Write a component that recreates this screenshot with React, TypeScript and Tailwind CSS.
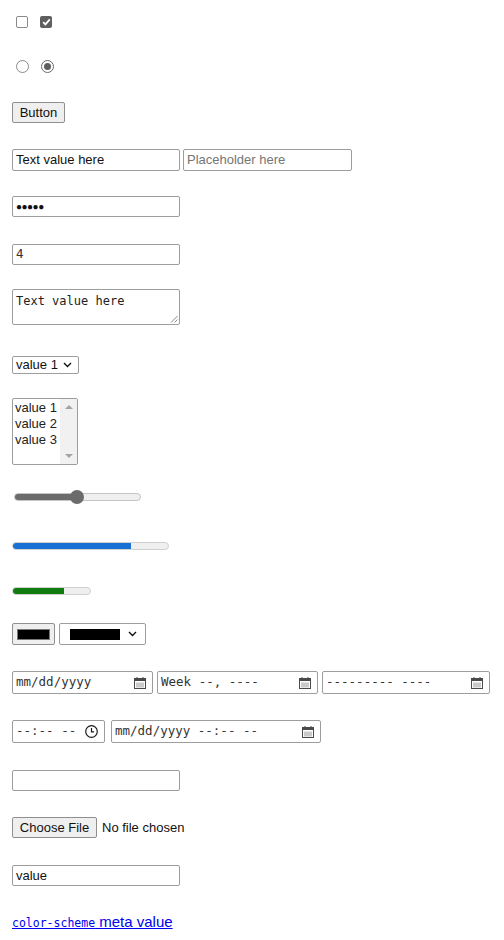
import React from "react"

// ── Small drawn glyphs ─────────────────────────────────────────────────────
function CalendarIcon() {
  return (
    <svg width="12" height="12" viewBox="0 0 12 12" className="shrink-0">
      <rect x="0.5" y="1.5" width="11" height="10" fill="none" stroke="#4a4a4a" />
      <rect x="0.5" y="1.5" width="11" height="2.5" fill="#4a4a4a" />
      <rect x="2.5" y="0" width="1" height="2" fill="#4a4a4a" />
      <rect x="8.5" y="0" width="1" height="2" fill="#4a4a4a" />
      <path d="M3 5.5v5M5 5.5v5M7 5.5v5M9 5.5v5" stroke="#7a7a7a" strokeWidth="0.8" />
    </svg>
  )
}

function ClockIcon() {
  return (
    <svg width="13" height="13" viewBox="0 0 13 13" className="shrink-0">
      <circle cx="6.5" cy="6.5" r="5.8" fill="none" stroke="#1a1a1a" strokeWidth="1.2" />
      <path d="M6.5 3v3.8h2.6" fill="none" stroke="#1a1a1a" strokeWidth="1.2" />
    </svg>
  )
}

function Chevron() {
  return (
    <svg width="9" height="6" viewBox="0 0 9 6" className="shrink-0">
      <path d="M1 1l3.5 3.5L8 1" fill="none" stroke="#111" strokeWidth="1.4" />
    </svg>
  )
}

const sans = "font-['Liberation_Sans',Arial,sans-serif]"
const mono = "font-['DejaVu_Sans_Mono','Liberation_Mono',monospace]"
const field = "border border-[#9d9d9d] rounded-[2px] bg-white"

function TextBox({ children, w = "w-[168px]", h = "h-[21px]", mt = "" }: { children?: React.ReactNode; w?: string; h?: string; mt?: string }) {
  return (
    <div className={`${field} ${w} ${h} ${mt} flex items-center pl-[3px] text-[13px] text-[#111] ${sans}`}>
      {children}
    </div>
  )
}

function DateBox({ text, w, icon }: { text: string; w: string; icon: React.ReactNode }) {
  return (
    <div className={`${field} ${w} h-[23px] flex items-center justify-between pl-[3px] pr-[6px]`}>
      <span className={`${mono} text-[12.5px] text-[#333] whitespace-pre`}>{text}</span>
      {icon}
    </div>
  )
}

// ── Page ───────────────────────────────────────────────────────────────────
export default function App() {
  return (
    <div className={`w-[504px] h-[940px] bg-white pl-3 pt-4 ${sans} text-black overflow-hidden`}>

      {/* checkboxes */}
      <div className="flex gap-3 pl-1 h-3">
        <div className="w-3 h-3 border border-[#8a8a8a] rounded-[2px] bg-white" />
        <div className="w-3 h-3 rounded-[2px] bg-[#5f5f5f] flex items-center justify-center">
          <svg width="9" height="8" viewBox="0 0 9 8">
            <path d="M1.2 4.2l2.2 2.2L7.8 1.4" fill="none" stroke="#fff" strokeWidth="1.8" />
          </svg>
        </div>
      </div>

      {/* radios */}
      <div className="flex gap-3 pl-1 mt-8 h-[13px]">
        <div className="w-[13px] h-[13px] rounded-full border border-[#8a8a8a] bg-white" />
        <div className="w-[13px] h-[13px] rounded-full border border-[#6b6b6b] bg-white flex items-center justify-center">
          <div className="w-[7px] h-[7px] rounded-full bg-[#5f5f5f]" />
        </div>
      </div>

      {/* button */}
      <div className="mt-[29px] flex items-center justify-center w-[53px] h-[21px] bg-[#efefef] border border-[#8f8f8f] rounded-[2px] text-[13px] text-[#111]">
        Button
      </div>

      {/* text inputs */}
      <div className="flex gap-[3px] mt-[26px]">
        <TextBox h="h-[22px]">Text value here</TextBox>
        <TextBox w="w-[169px]" h="h-[22px]"><span className="text-[#757575]">Placeholder here</span></TextBox>
      </div>

      {/* password */}
      <TextBox mt="mt-[25px]"><span className="text-[10px] tracking-[-0.5px]">●●●●●</span></TextBox>

      {/* number */}
      <TextBox mt="mt-[27px]"><span className={`${mono} text-[12.5px] text-[#333]`}>4</span></TextBox>

      {/* textarea */}
      <div className={`${field} mt-[24px] w-[168px] h-[36px] relative pl-[3px] pt-[1px] leading-[18px]`}>
        <span className={`${mono} text-[12px] text-[#222] whitespace-pre`}>Text value here</span>
        <svg width="8" height="8" viewBox="0 0 8 8" className="absolute right-[1px] bottom-[1px]">
          <path d="M7.5 1L1 7.5M7.5 4.5L4.5 7.5" stroke="#8a8a8a" strokeWidth="1" />
        </svg>
      </div>

      {/* select */}
      <div className={`${field} mt-[31px] w-[67px] h-[18px] flex items-center justify-between pl-[3px] pr-[6px] text-[13px] text-[#111]`}>
        <span>value 1</span>
        <Chevron />
      </div>

      {/* listbox */}
      <div className={`${field} mt-[24px] w-[66px] h-[67px] flex`}>
        <div className="flex-1 pl-[2px] pt-[1px] text-[13px] leading-[16px] text-[#222]">
          <div>value 1</div>
          <div>value 2</div>
          <div>value 3</div>
        </div>
        <div className="w-[17px] bg-[#f1f1f1] flex flex-col items-center justify-between py-[6px]">
          <div className="w-0 h-0 border-x-[4px] border-x-transparent border-b-[4px] border-b-[#a3a3a3]" />
          <div className="w-0 h-0 border-x-[4px] border-x-transparent border-t-[4px] border-t-[#a3a3a3]" />
        </div>
      </div>

      {/* range */}
      <div className="mt-[25px] relative w-[127px] h-[14px] ml-[2px] flex items-center">
        <div className="w-full h-[8px] rounded-full border border-[#c4c4c4] bg-[#efefef] overflow-hidden">
          <div className="h-full w-[63px] bg-[#6b6b6b]" />
        </div>
        <div className="absolute left-[56px] top-0 w-[14px] h-[14px] rounded-full bg-[#6b6b6b]" />
      </div>

      {/* progress */}
      <div className="mt-[38px] w-[157px] h-[8px] rounded-full border border-[#d0d0d0] bg-[#efefef] overflow-hidden">
        <div className="h-full w-[118px] bg-[#1a71d4]" />
      </div>

      {/* meter */}
      <div className="mt-[37px] w-[79px] h-[8px] rounded-full border border-[#d0d0d0] bg-[#efefef] overflow-hidden">
        <div className="h-full w-[51px] bg-[#107c10]" />
      </div>

      {/* color inputs */}
      <div className="flex gap-[4px] mt-[28px]">
        <div className="w-[43px] h-[22px] bg-[#efefef] border border-[#8f8f8f] rounded-[2px] flex items-center justify-center">
          <div className="w-[33px] h-[11px] bg-black border border-[#777]" />
        </div>
        <div className={`${field} w-[87px] h-[22px] flex items-center pl-[10px] pr-[8px] justify-between`}>
          <div className="w-[50px] h-[11px] bg-black" />
          <Chevron />
        </div>
      </div>

      {/* date / week / month */}
      <div className="flex gap-[4px] mt-[26px]">
        <DateBox text="mm/dd/yyyy" w="w-[141px]" icon={<CalendarIcon />} />
        <DateBox text="Week --, ----" w="w-[161px]" icon={<CalendarIcon />} />
        <DateBox text="--------- ----" w="w-[168px]" icon={<CalendarIcon />} />
      </div>

      {/* time / datetime */}
      <div className="flex gap-[6px] mt-[26px]">
        <DateBox text="--:-- --" w="w-[93px]" icon={<ClockIcon />} />
        <DateBox text="mm/dd/yyyy --:-- --" w="w-[210px]" icon={<CalendarIcon />} />
      </div>

      {/* empty input */}
      <TextBox mt="mt-[27px]" />

      {/* file */}
      <div className="flex items-center gap-[5px] mt-[26px] text-[13px] text-[#111]">
        <div className="w-[85px] h-[21px] bg-[#efefef] border border-[#8f8f8f] rounded-[2px] flex items-center justify-center">
          Choose File
        </div>
        <span>No file chosen</span>
      </div>

      {/* value */}
      <TextBox mt="mt-[27px]">value</TextBox>

      {/* link */}
      <div className="mt-[27px] leading-[18px]">
        <a className="text-[#0000ee] underline">
          <code className={`${mono} text-[11.5px]`}>color-scheme</code>
          <span className="text-[15px]"> meta value</span>
        </a>
      </div>
    </div>
  )
}
